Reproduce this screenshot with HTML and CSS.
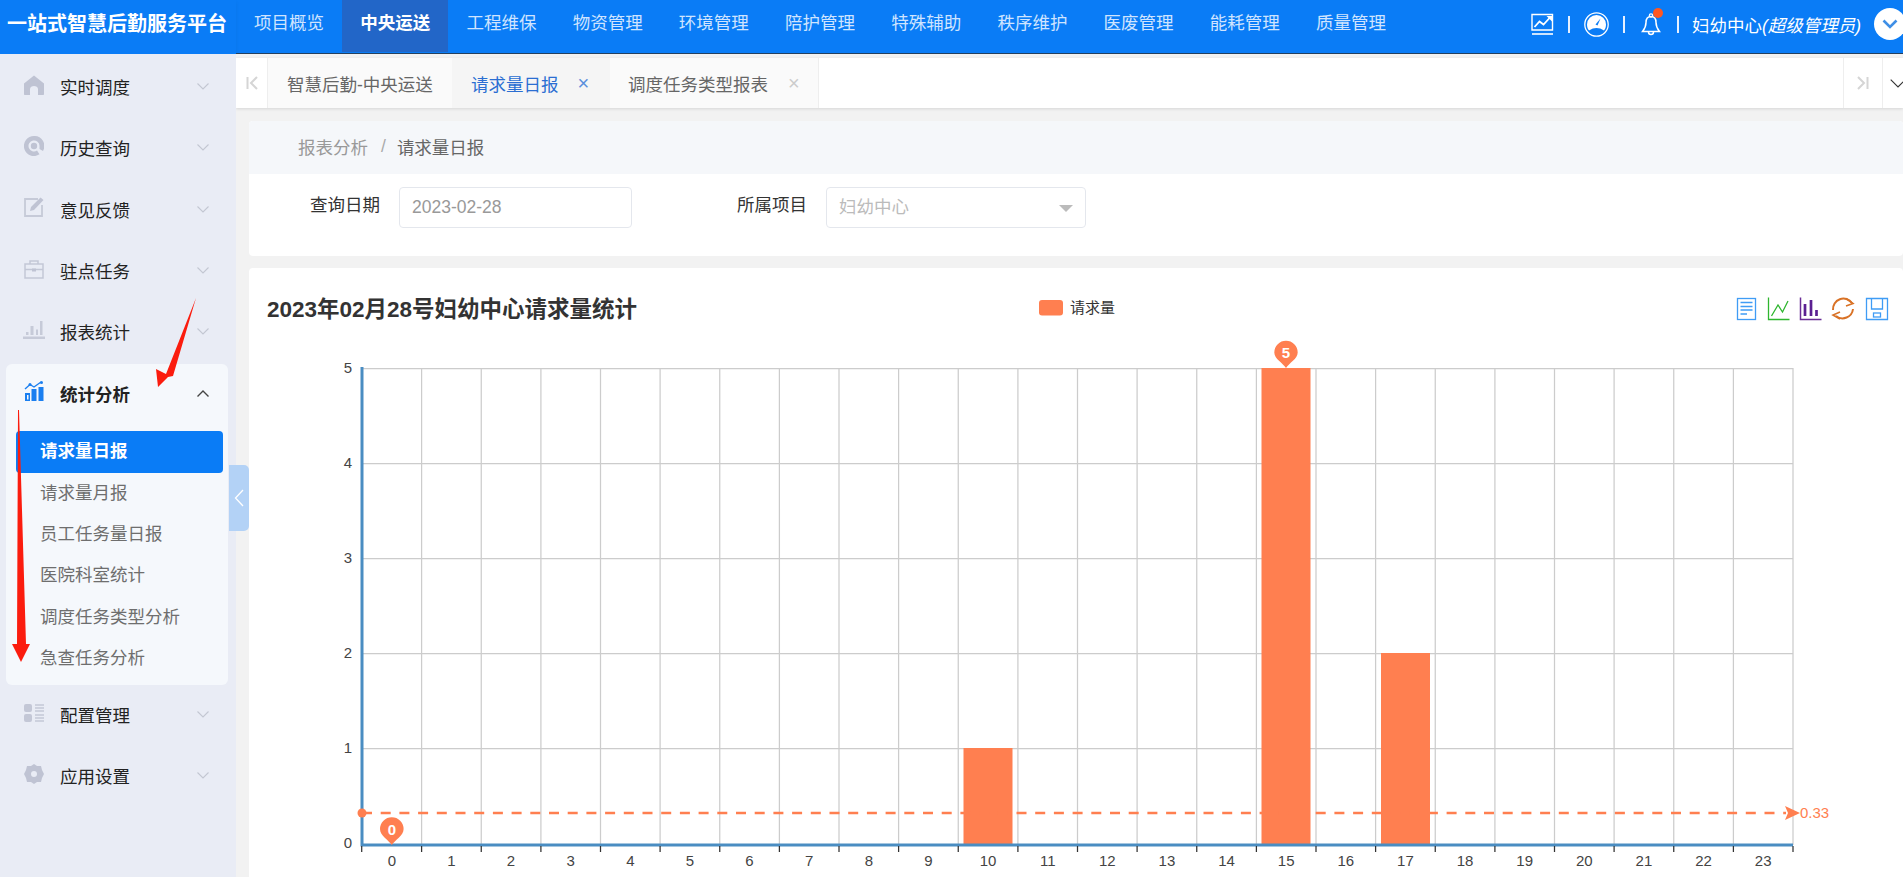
FILE: index.html
```html
<!DOCTYPE html>
<html lang="zh-CN">
<head>
<meta charset="utf-8">
<title>一站式智慧后勤服务平台</title>
<link rel="stylesheet" href="styles.css">
</head>
<body>
<div class="app">
  <header class="topbar">
    <div class="logo">一站式智慧后勤服务平台</div>
    <div class="topbar-main">
      <nav class="nav">
        <a class="nav-item">项目概览</a>
        <a class="nav-item active">中央运送</a>
        <a class="nav-item">工程维保</a>
        <a class="nav-item">物资管理</a>
        <a class="nav-item">环境管理</a>
        <a class="nav-item">陪护管理</a>
        <a class="nav-item">特殊辅助</a>
        <a class="nav-item">秩序维护</a>
        <a class="nav-item">医废管理</a>
        <a class="nav-item">能耗管理</a>
        <a class="nav-item">质量管理</a>
      </nav>
      <div class="tools">
        <svg class="tool-chart" viewBox="0 0 23 23"><path d="M1 1.500H21.500V17H1Z" fill="none" stroke="#fff" stroke-width="1.400"/><path d="M1 21H22" stroke="#fff" stroke-width="1.600"/><path d="M3.500 14L8.500 8.500L12.500 11.500L19 4.500" fill="none" stroke="#fff" stroke-width="1.800"/><path d="M15.500 3H21V8.500Z" fill="#fff"/></svg>
        <i class="tool-sep"></i>
        <svg class="tool-gauge" viewBox="0 0 25 25"><circle cx="12.500" cy="12.500" r="11.700" fill="none" stroke="#fff" stroke-width="1.300"/><path d="M3 12.500A9.500 9.500 0 0 1 22 12.500C22 15 21.300 17 20 18.500C17.500 16.800 15 16 12.500 16C10 16 7.500 16.800 5 18.500C3.700 17 3 15 3 12.500Z" fill="#fff"/><path d="M11.500 12.500L16.500 6.500L13.500 13.500Z" fill="#0a7cf6"/></svg>
        <i class="tool-sep"></i>
        <span class="bell">
          <svg viewBox="0 0 20 24"><path d="M10 4C6 4 5 7 5 10C5 14 4 16 1.500 19H18.500C16 16 15 14 15 10C15 7 14 4 10 4Z" fill="none" stroke="#fff" stroke-width="1.500"/><circle cx="10" cy="3" r="1.700" fill="none" stroke="#fff" stroke-width="1.200"/><path d="M7.500 19.500A2.500 2.500 0 0 0 12.500 19.500" fill="none" stroke="#fff" stroke-width="1.500"/></svg>
          <b class="bell-dot"></b>
        </span>
        <i class="tool-sep"></i>
        <span class="user">妇幼中心<em>(超级管理员)</em></span>
        <span class="avatar"><svg viewBox="0 0 16 10"><path d="M1.500 1.500L8 8L14.500 1.500" fill="none" stroke="#3f8fe6" stroke-width="2.600"/></svg></span>
      </div>
    </div>
  </header>

  <div class="workspace">
    <aside class="sidebar">
      <div class="menu-item">
        <svg class="menu-icon" viewBox="0 0 20 20"><path d="M10 0.500L20 8.500V19C20 19.600 19.600 20 19 20H14V14C14 12 12 11 10 11C8 11 6 12 6 14V20H1C0.400 20 0 19.600 0 19V8.500Z" fill="#bfc3d3"/></svg>
        <span>实时调度</span>
        <svg class="chev" viewBox="0 0 12 7"><path d="M0.500 0.500L6 6L11.500 0.500" fill="none" stroke="#c3c7d2" stroke-width="1.100"/></svg>
      </div>
      <div class="menu-item">
        <svg class="menu-icon" viewBox="0 0 20 20"><path d="M10 0A10 10 0 1 0 15.500 18.300L13 14.500A5.500 5.500 0 1 1 15.500 10V13L19 15A10 10 0 0 0 10 0Z" fill="#bfc3d3"/><circle cx="10" cy="10" r="3.200" fill="#bfc3d3"/></svg>
        <span>历史查询</span>
        <svg class="chev" viewBox="0 0 12 7"><path d="M0.500 0.500L6 6L11.500 0.500" fill="none" stroke="#c3c7d2" stroke-width="1.100"/></svg>
      </div>
      <div class="menu-item">
        <svg class="menu-icon" viewBox="0 0 20 20"><path d="M14 2H1V19H18V8" fill="none" stroke="#c6cad8" stroke-width="1.800"/><path d="M6 14L7 10L16.500 0.500L19.500 3L10 13Z" fill="#bfc3d3"/></svg>
        <span>意见反馈</span>
        <svg class="chev" viewBox="0 0 12 7"><path d="M0.500 0.500L6 6L11.500 0.500" fill="none" stroke="#c3c7d2" stroke-width="1.100"/></svg>
      </div>
      <div class="menu-item">
        <svg class="menu-icon" viewBox="0 0 20 20"><path d="M1 5H19V19H1ZM6 5V2H14V5M1 10.500H19" fill="none" stroke="#c3c7d6" stroke-width="1.500"/><path d="M8 9.500H12V12.500H8Z" fill="#bfc3d3"/></svg>
        <span>驻点任务</span>
        <svg class="chev" viewBox="0 0 12 7"><path d="M0.500 0.500L6 6L11.500 0.500" fill="none" stroke="#c3c7d2" stroke-width="1.100"/></svg>
      </div>
      <div class="menu-item">
        <svg class="menu-icon wide" viewBox="0 0 22 20"><path d="M0 16.500H22V19H0Z" fill="#c6cad8"/><path d="M3 12H5.500V15H3ZM7.500 6H10.500V15H7.500ZM13 9.500H15V15H13ZM17 1H19.500V15H17Z" fill="#c6cad8"/></svg>
        <span>报表统计</span>
        <svg class="chev" viewBox="0 0 12 7"><path d="M0.500 0.500L6 6L11.500 0.500" fill="none" stroke="#c3c7d2" stroke-width="1.100"/></svg>
      </div>

      <div class="menu-card">
        <div class="menu-item open">
          <svg class="menu-icon" viewBox="0 0 20 20"><path d="M1 12H6V20H1ZM7.500 8H12.500V20H7.500ZM14.500 6H19.500V20H14.500Z" fill="#1a7ff0"/><path d="M3 14H4.500V18.500H3Z" fill="#f5f8fc"/><path d="M1 8L6 3.500L10 6L17 1" fill="none" stroke="#1a7ff0" stroke-width="1.400"/><circle cx="6" cy="3.500" r="1.500" fill="#1a7ff0"/><circle cx="17.500" cy="1.500" r="1.500" fill="#1a7ff0"/></svg>
          <span>统计分析</span>
          <svg class="chev" viewBox="0 0 12 7"><path d="M0.500 6.500L6 1L11.500 6.500" fill="none" stroke="#444" stroke-width="1.400"/></svg>
        </div>
        <ul class="submenu">
          <li class="sub-item active">请求量日报</li>
          <li class="sub-item">请求量月报</li>
          <li class="sub-item">员工任务量日报</li>
          <li class="sub-item">医院科室统计</li>
          <li class="sub-item">调度任务类型分析</li>
          <li class="sub-item">急查任务分析</li>
        </ul>
      </div>

      <div class="menu-item">
        <svg class="menu-icon" viewBox="0 0 20 20"><rect x="0" y="1" width="8" height="8" rx="2" fill="#c3c7d6"/><rect x="0" y="11" width="8" height="8" rx="2" fill="#c3c7d6"/><path d="M11 2H20M11 5H20M11 8H20M11 12H20M11 15H20M11 18H20" stroke="#c3c7d6" stroke-width="1.700"/></svg>
        <span>配置管理</span>
        <svg class="chev" viewBox="0 0 12 7"><path d="M0.500 0.500L6 6L11.500 0.500" fill="none" stroke="#c3c7d2" stroke-width="1.100"/></svg>
      </div>
      <div class="menu-item">
        <svg class="menu-icon" viewBox="0 0 20 20"><path fill-rule="evenodd" d="M10 0L13 2H17L18 6L20 10L18 14L17 18H13L10 20L7 18H3L2 14L0 10L2 6L3 2H7ZM10 7A3 3 0 1 0 10 13A3 3 0 1 0 10 7Z" fill="#bfc3d3"/></svg>
        <span>应用设置</span>
        <svg class="chev" viewBox="0 0 12 7"><path d="M0.500 0.500L6 6L11.500 0.500" fill="none" stroke="#c3c7d2" stroke-width="1.100"/></svg>
      </div>

      <div class="collapse"><svg viewBox="0 0 10 18"><path d="M9 1L1.500 9L9 17" fill="none" stroke="#fff" stroke-width="1.300"/></svg></div>
    </aside>

    <main class="content">
      <div class="tabs">
        <div class="tab-btn first"><svg viewBox="0 0 12 14"><path d="M1.500 1V13" stroke="#d5d5d5" stroke-width="2"/><path d="M11 1L5 7L11 13" fill="none" stroke="#d5d5d5" stroke-width="2"/></svg></div>
        <div class="tab">智慧后勤-中央运送</div>
        <div class="tab current">请求量日报<span class="tab-close">×</span></div>
        <div class="tab">调度任务类型报表<span class="tab-close">×</span></div>
        <div class="tab-btn next"><svg viewBox="0 0 12 14"><path d="M1 1L7 7L1 13" fill="none" stroke="#d5d5d5" stroke-width="2"/><path d="M10.500 1V13" stroke="#d5d5d5" stroke-width="2"/></svg></div>
        <div class="tab-btn last"><svg viewBox="0 0 16 9"><path d="M0.700 0.700L8 8L15.300 0.700" fill="none" stroke="#333" stroke-width="1.100"/></svg></div>
      </div>

      <section class="panel-filter">
        <div class="breadcrumb"><span class="crumb-link">报表分析</span><span class="crumb-sep">/</span><span class="crumb-now">请求量日报</span></div>
        <form class="filter">
          <label class="filter-label">查询日期</label>
          <div class="field date">2023-02-28</div>
          <label class="filter-label second">所属项目</label>
          <div class="field select">妇幼中心<i class="select-arrow"></i></div>
        </form>
      </section>

      <section class="panel-chart">
        <svg class="chart" viewBox="249 268 1654 609" width="1654" height="609">
          <text class="chart-title" x="267" y="317">2023年02月28号妇幼中心请求量统计</text>
          <rect x="1039" y="300" width="24" height="15.500" rx="3" fill="#ff7f50"/>
          <text class="legend" x="1070" y="313">请求量</text>

          <g fill="none">
            <g stroke="#3f9cf5" stroke-width="1.300">
              <rect x="1737.500" y="298.500" width="18" height="21"/>
              <path d="M1740.500 302.500H1752.500M1740.500 306.500H1752.500M1740.500 310H1752.500M1740.500 314H1747"/>
            </g>
            <path d="M1768.500 297.500V319.500H1789.500M1771.500 316L1778 305L1782.500 312L1788 301" stroke="#2fb62f" stroke-width="1.300"/>
            <path d="M1800.500 297.500V319.500H1821.500" stroke="#6a2d95" stroke-width="1.500"/>
            <path d="M1805 316V304M1811 316V300M1816.500 316V310" stroke="#5b2091" stroke-width="2.700"/>
            <path d="M1833 310A10.500 10.500 0 0 1 1852 303M1853 309A10.500 10.500 0 0 1 1836 316" stroke="#d97226" stroke-width="2"/>
            <path d="M1846 298.500L1853 303.500L1846 306M1840 312L1833 315L1840 319" stroke="#d97226" stroke-width="1.600"/>
            <g stroke="#3f9cf5" stroke-width="1.300">
              <path d="M1866.500 298.500H1887.500V319.500H1866.500Z"/>
              <path d="M1871.500 298.500V309H1882.500V298.500"/>
              <rect x="1873.500" y="313" width="7" height="4"/>
            </g>
          </g>

          <g stroke="#ccc" stroke-width="1.250">
            <path d="M362 368.500H1793M362 463.500H1793M362 558.500H1793M362 653.500H1793M362 748.500H1793"/>
            <path d="M421.600 368V845M481.250 368V845M540.900 368V845M600.500 368V845M660.100 368V845M719.750 368V845M779.400 368V845M839 368V845M898.600 368V845M958.250 368V845M1017.900 368V845M1077.500 368V845M1137.100 368V845M1196.750 368V845M1256.400 368V845M1316 368V845M1375.600 368V845M1435.250 368V845M1494.900 368V845M1554.500 368V845M1614.100 368V845M1673.750 368V845M1733.400 368V845M1793 368V845"/>
          </g>

          <rect x="963.500" y="748" width="49" height="97" fill="#ff7f50"/>
          <rect x="1261.500" y="368" width="49" height="477" fill="#ff7f50"/>
          <rect x="1381" y="653" width="49" height="192" fill="#ff7f50"/>

          <path d="M362 845V367M360.500 845H1793" fill="none" stroke="#4a8dc2" stroke-width="3"/>
          <path d="M361.700 846V852M421.600 846V852M481.250 846V852M540.900 846V852M600.500 846V852M660.100 846V852M719.750 846V852M779.400 846V852M839 846V852M898.600 846V852M958.250 846V852M1017.900 846V852M1077.500 846V852M1137.100 846V852M1196.750 846V852M1256.400 846V852M1316 846V852M1375.600 846V852M1435.250 846V852M1494.900 846V852M1554.500 846V852M1614.100 846V852M1673.750 846V852M1733.400 846V852M1793 846V852" stroke="#333" stroke-width="1.250"/>

          <g class="axis-y">
            <text x="352" y="373">5</text>
            <text x="352" y="468">4</text>
            <text x="352" y="563">3</text>
            <text x="352" y="658">2</text>
            <text x="352" y="753">1</text>
            <text x="352" y="848">0</text>
          </g>
          <g class="axis-x">
            <text x="391.800" y="866">0</text>
            <text x="451.400" y="866">1</text>
            <text x="511" y="866">2</text>
            <text x="570.700" y="866">3</text>
            <text x="630.300" y="866">4</text>
            <text x="689.900" y="866">5</text>
            <text x="749.500" y="866">6</text>
            <text x="809.200" y="866">7</text>
            <text x="868.800" y="866">8</text>
            <text x="928.400" y="866">9</text>
            <text x="988" y="866">10</text>
            <text x="1047.700" y="866">11</text>
            <text x="1107.300" y="866">12</text>
            <text x="1166.900" y="866">13</text>
            <text x="1226.500" y="866">14</text>
            <text x="1286.200" y="866">15</text>
            <text x="1345.800" y="866">16</text>
            <text x="1405.400" y="866">17</text>
            <text x="1465" y="866">18</text>
            <text x="1524.700" y="866">19</text>
            <text x="1584.300" y="866">20</text>
            <text x="1643.900" y="866">21</text>
            <text x="1703.500" y="866">22</text>
            <text x="1763.200" y="866">23</text>
          </g>

          <circle cx="362" cy="813" r="4.500" fill="#ff7f50"/>
          <path d="M362 813H1786" stroke="#ff7f50" stroke-width="2.500" stroke-dasharray="10 8.700"/>
          <path d="M1785 806L1800 813L1785 820L1788 813Z" fill="#ff7f50"/>
          <text class="avg" x="1800" y="818">0.33</text>

          <path d="M391.800 845C388.800 840 380 836 380 829A11.700 11.700 0 1 1 403.600 829C403.600 836 394.800 840 391.800 845Z" fill="#ff7f50"/>
          <text class="pin-text" x="391.800" y="835">0</text>
          <path d="M1286 368C1283 363 1274.300 359 1274.300 352.500A11.700 11.700 0 1 1 1297.700 352.500C1297.700 359 1289 363 1286 368Z" fill="#ff7f50"/>
          <text class="pin-text" x="1286" y="358">5</text>
        </svg>
      </section>
    </main>
  </div>

  <svg class="annotation" viewBox="0 0 1903 877" width="1903" height="877">
    <path d="M196 298L173 376L168 377L158 387L156 369L166 374Z" fill="#fb1c0e"/>
    <path d="M18 410H19L26 644H30L21 662L12 644H17Z" fill="#fb1c0e"/>
  </svg>
</div>
</body>
</html>
```
FILE: styles.css
```css
* { box-sizing: border-box; }
html, body { margin: 0; height: 100%; overflow: hidden; }
body {
  font-family: "Liberation Sans", "Noto Sans CJK SC", sans-serif;
  font-size: 17.5px;
  color: #333;
  background: #f2f2f2;
}
.app { position: relative; width: 1903px; height: 877px; display: flex; flex-direction: column; overflow: hidden; }

/* top bar */
.topbar { display: flex; height: 54px; flex: none; background: #0a7cf6; color: #fff; }
.logo { width: 236px; flex: none; padding-left: 7px; line-height: 49px; font-size: 20px; font-weight: 700; white-space: nowrap; box-shadow: 0 2px 4px rgba(0, 0, 0, .06); }
.topbar-main { flex: 1; display: flex; justify-content: space-between; border-bottom: 1px solid #24405f; }
.nav { display: flex; }
.nav-item { width: 106.200px; height: 52px; line-height: 46px; text-align: center; color: #cfe4ff; white-space: nowrap; }
.nav-item.active { background: #2266c8; color: #fff; font-weight: 700; }
.tools { display: flex; align-items: center; padding-bottom: 5px; width: 372px; }
.tool-chart { width: 23px; height: 23px; margin-right: 14px; flex: none; }
.tool-sep { width: 2px; height: 17px; background: #e6f0ff; flex: none; }
.tool-gauge { width: 25px; height: 25px; margin: 0 14px; flex: none; }
.bell { position: relative; width: 20px; height: 25px; margin: 0 16px 0 16px; display: block; flex: none; }
.bell svg { width: 20px; height: 25px; display: block; }
.bell-dot { position: absolute; top: -4px; right: -2px; width: 10px; height: 10px; border-radius: 50%; background: #ff5722; }
.user { margin-left: 13px; white-space: nowrap; }
.user em { font-style: italic; }
.avatar { margin-left: 13px; width: 32px; height: 32px; border-radius: 50%; background: #fff; display: flex; align-items: center; justify-content: center; flex: none; }
.avatar svg { width: 16px; height: 10px; }

/* layout */
.workspace { flex: 1; display: flex; min-height: 0; }
.sidebar { position: relative; width: 236px; flex: none; padding: 2px 8px 0 6px; background: #e9ecf5; }
.menu-item { display: flex; align-items: center; height: 61.300px; padding: 0 19px 0 18px; color: #222; }
.menu-item span { margin-left: 16px; flex: 1; white-space: nowrap; }
.menu-icon { width: 20px; height: 20px; flex: none; position: relative; top: -2px; }
.menu-icon.wide { width: 22px; margin: 0 -1px; }
.chev { width: 12px; height: 7px; flex: none; }
.menu-card { margin: 1.500px 0 -1px; height: 321px; border-radius: 6px; background: #f5f8fc; }
.menu-item.open { height: 59px; color: #222; font-weight: 700; }
.submenu { list-style: none; margin: 8.500px 0 0; padding: 0 5px 0 10px; }
.sub-item { height: 41.300px; line-height: 41px; padding-left: 24px; color: #6e6e6e; white-space: nowrap; }
.sub-item.active { background: #0a7cf6; color: #fff; font-weight: 700; border-radius: 4px; }
.collapse { position: absolute; left: 229px; top: 411px; width: 20px; height: 66px; background: #b3d2f6; border-radius: 0 5px 5px 0; display: flex; align-items: center; justify-content: center; z-index: 2; }
.collapse svg { width: 10px; height: 18px; }

/* tabs */
.content { flex: 1; min-width: 0; padding-top: 4px; background: #f2f2f2; }
.tabs { display: flex; height: 50px; background: #fff; box-shadow: 0 1px 3px rgba(0, 0, 0, .12); }
.tab-btn { display: flex; align-items: center; justify-content: center; flex: none; }
.tab-btn.first { width: 32px; border-right: 1px solid #eee; }
.tab-btn.first svg, .tab-btn.next svg { width: 12px; height: 14px; }
.tab-btn.next { margin-left: auto; width: 39px; border-left: 1px solid #eee; }
.tab-btn.last { width: 21px; border-left: 1px solid #eee; justify-content: flex-start; padding-left: 7px; }
.tab-btn.last svg { width: 16px; height: 9px; flex: none; }
.tab { display: flex; align-items: center; padding: 0 19px; height: 50px; background: #fafafa; color: #666; white-space: nowrap; }
.tab:nth-child(2) { width: 184px; }
.tab.current { width: 158px; background: #f5f5f5; color: #2b6ed2; padding-left: 19px; }
.tab:nth-child(4) { width: 209px; padding-left: 18px; border-right: 1px solid #eee; }
.tab-close { margin-left: 20px; font-size: 20px; color: #ccc; line-height: 1; font-weight: 400; }
.tab.current .tab-close { color: #5a8fdc; margin-left: 19px; }

/* filter panel */
.panel-filter { margin: 13px 0 0 13px; height: 135px; background: #fff; border-radius: 4px; overflow: hidden; }
.breadcrumb { height: 53px; padding: 0 0 2px 49px; display: flex; align-items: center; background: #f5f7fa; color: #999; }
.crumb-sep { margin: 0 11px 0 13px; color: #aaa; }
.crumb-now { color: #666; }
.filter { display: flex; padding: 13px 0 0 61px; }
.filter-label { width: 70px; margin-right: 19px; line-height: 36px; color: #333; white-space: nowrap; }
.filter-label.second { margin-left: 105px; }
.field { height: 41px; line-height: 39px; padding-left: 12px; border: 1px solid #e4e7ed; border-radius: 4px; color: #999; background: #fff; }
.field.date { width: 233px; }
.field.select { position: relative; width: 260px; color: #bbb; }
.select-arrow { position: absolute; right: 12px; top: 17px; border: 7.500px solid transparent; border-top: 7px solid #bbb; border-bottom: 0; }

/* chart panel */
.panel-chart { margin: 12px 0 0 13px; height: 609px; background: #fff; border-radius: 4px 4px 0 0; overflow: hidden; }
.chart { display: block; }
.chart-title { font-size: 22.500px; font-weight: 700; fill: #333; }
.legend { font-size: 15px; fill: #333; }
.axis-y text { font-size: 15px; fill: #444; text-anchor: end; }
.axis-x text { font-size: 15px; fill: #444; text-anchor: middle; }
.avg { font-size: 15px; fill: #ff7f50; }
.pin-text { font-size: 15px; font-weight: 700; fill: #fff; text-anchor: middle; }

/* hand-drawn annotation arrows over the screenshot */
.annotation { position: absolute; left: 0; top: 0; pointer-events: none; z-index: 5; }
```
